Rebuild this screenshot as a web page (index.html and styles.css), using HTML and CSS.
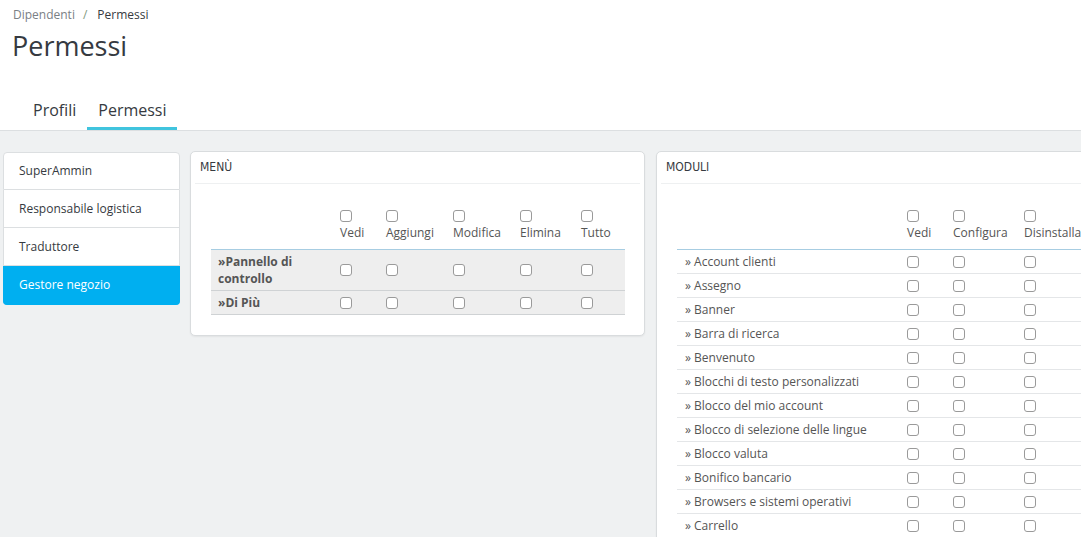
FILE: index.html
```html
<!DOCTYPE html>
<html lang="it">
<head>
<meta charset="utf-8">
<title>Permessi</title>
<link rel="stylesheet" href="styles.css">
</head>
<body>
<header class="head">
  <div class="crumbs"><span class="crumb">Dipendenti</span><span class="sep">/</span><span class="crumb-cur">Permessi</span></div>
  <h1 class="title">Permessi</h1>
  <nav class="tabs">
    <span class="tab">Profili</span>
    <span class="tab active">Permessi</span>
  </nav>
</header>
<main class="main">
  <ul class="profiles">
    <li class="profile">SuperAmmin</li>
    <li class="profile">Responsabile logistica</li>
    <li class="profile">Traduttore</li>
    <li class="profile active">Gestore negozio</li>
  </ul>
  <section class="panel panel-menu">
    <div class="panel-head">MENÙ</div>
    <table class="perm perm-menu">
      <colgroup><col class="c-name"><col class="c-46"><col class="c-67"><col class="c-67"><col class="c-61"><col class="c-49"></colgroup>
      <thead>
        <tr><th></th><th><input type="checkbox" class="cb"><br>Vedi</th><th><input type="checkbox" class="cb"><br>Aggiungi</th><th><input type="checkbox" class="cb"><br>Modifica</th><th><input type="checkbox" class="cb"><br>Elimina</th><th><input type="checkbox" class="cb"><br>Tutto</th></tr>
      </thead>
      <tbody>
        <tr class="grey"><td class="name bold">»Pannello di controllo</td><td><input type="checkbox" class="cb"></td><td><input type="checkbox" class="cb"></td><td><input type="checkbox" class="cb"></td><td><input type="checkbox" class="cb"></td><td><input type="checkbox" class="cb"></td></tr>
        <tr class="grey"><td class="name bold">»Di Più</td><td><input type="checkbox" class="cb"></td><td><input type="checkbox" class="cb"></td><td><input type="checkbox" class="cb"></td><td><input type="checkbox" class="cb"></td><td><input type="checkbox" class="cb"></td></tr>
      </tbody>
    </table>
  </section>
  <section class="panel panel-mod">
    <div class="panel-head">MODULI</div>
    <table class="perm perm-mod">
      <colgroup><col class="c-modname"><col class="c-46"><col class="c-71"><col class="c-90"></colgroup>
      <thead>
        <tr><th></th><th><input type="checkbox" class="cb"><br>Vedi</th><th><input type="checkbox" class="cb"><br>Configura</th><th><input type="checkbox" class="cb"><br>Disinstalla</th></tr>
      </thead>
      <tbody>
        <tr><td class="name">» Account clienti</td><td><input type="checkbox" class="cb"></td><td><input type="checkbox" class="cb"></td><td><input type="checkbox" class="cb"></td></tr>
        <tr><td class="name">» Assegno</td><td><input type="checkbox" class="cb"></td><td><input type="checkbox" class="cb"></td><td><input type="checkbox" class="cb"></td></tr>
        <tr><td class="name">» Banner</td><td><input type="checkbox" class="cb"></td><td><input type="checkbox" class="cb"></td><td><input type="checkbox" class="cb"></td></tr>
        <tr><td class="name">» Barra di ricerca</td><td><input type="checkbox" class="cb"></td><td><input type="checkbox" class="cb"></td><td><input type="checkbox" class="cb"></td></tr>
        <tr><td class="name">» Benvenuto</td><td><input type="checkbox" class="cb"></td><td><input type="checkbox" class="cb"></td><td><input type="checkbox" class="cb"></td></tr>
        <tr><td class="name">» Blocchi di testo personalizzati</td><td><input type="checkbox" class="cb"></td><td><input type="checkbox" class="cb"></td><td><input type="checkbox" class="cb"></td></tr>
        <tr><td class="name">» Blocco del mio account</td><td><input type="checkbox" class="cb"></td><td><input type="checkbox" class="cb"></td><td><input type="checkbox" class="cb"></td></tr>
        <tr><td class="name">» Blocco di selezione delle lingue</td><td><input type="checkbox" class="cb"></td><td><input type="checkbox" class="cb"></td><td><input type="checkbox" class="cb"></td></tr>
        <tr><td class="name">» Blocco valuta</td><td><input type="checkbox" class="cb"></td><td><input type="checkbox" class="cb"></td><td><input type="checkbox" class="cb"></td></tr>
        <tr><td class="name">» Bonifico bancario</td><td><input type="checkbox" class="cb"></td><td><input type="checkbox" class="cb"></td><td><input type="checkbox" class="cb"></td></tr>
        <tr><td class="name">» Browsers e sistemi operativi</td><td><input type="checkbox" class="cb"></td><td><input type="checkbox" class="cb"></td><td><input type="checkbox" class="cb"></td></tr>
        <tr><td class="name">» Carrello</td><td><input type="checkbox" class="cb"></td><td><input type="checkbox" class="cb"></td><td><input type="checkbox" class="cb"></td></tr>
      </tbody>
    </table>
  </section>
</main>
</body>
</html>
```

FILE: styles.css
```css
html, body {
  margin: 0;
  padding: 0;
  overflow: hidden;
  height: 100%;
}
body {
  font-family: "Open Sans", "Noto Sans", sans-serif;
  color: #363a41;
  background: #eff1f2;
  font-size: 12px;
}
.head {
  background: #fff;
  height: 130px;
  border-bottom: 1px solid #dcdfe1;
  box-sizing: content-box;
  display: flex;
  flex-direction: column;
}
.crumbs {
  padding: 6px 0 0 13px;
  font-size: 12px;
  line-height: 18px;
}
.crumb { color: #7a8085; }
.sep { color: #7f9a80; margin: 0 10px 0 8px; }
.crumb-cur { color: #363a41; }
.title {
  margin: 4px 0 0 12px;
  font-size: 27px;
  font-weight: 400;
  line-height: 36px;
  color: #363a41;
}
.tabs {
  margin-top: auto;
  padding-left: 22px;
  display: flex;
}
.tab {
  padding: 0 11px;
  font-size: 16px;
  line-height: 18px;
  height: 26px;
  color: #363a41;
  border-bottom: 3px solid transparent;
}
.tab.active { border-bottom-color: #40c4de; padding: 0 10px 0 11px; }

.main {
  display: flex;
  align-items: flex-start;
  padding: 20px 0 0 3px;
  width: 1200px;
}
.profiles {
  list-style: none;
  margin: 1px 10px 0 0;
  padding: 0;
  width: 177px;
  flex: none;
}
.profile {
  background: #fff;
  border: 1px solid #dcdfe1;
  border-top: none;
  height: 37px;
  line-height: 37px;
  padding-left: 15px;
  font-size: 12px;
  color: #363a41;
}
.profile:first-child { border-top: 1px solid #dcdfe1; border-radius: 4px 4px 0 0; height: 36px; line-height: 36px; }
.profile.active {
  background: #00aff0;
  border-color: #00aff0;
  color: #fff;
  border-radius: 0 0 4px 4px;
  height: 38px;
  line-height: 38px;
}
.panel {
  background: #fff;
  border: 1px solid #d9dcde;
  border-radius: 5px;
  box-shadow: 0 1px 2px rgba(0,0,0,0.06);
  padding: 0 4px 20px;
  flex: none;
}
.panel-menu { width: 445px; margin-right: 11px; }
.panel-mod { width: 520px; }
.panel-head {
  font-family: "DejaVu Sans Condensed", "Open Sans", sans-serif;
  font-size: 12px;
  color: #363a41;
  height: 31px;
  line-height: 31px;
  padding-left: 5px;
  border-bottom: 1px solid #eef0f1;
}
.perm {
  border-collapse: collapse;
  table-layout: fixed;
  margin: 0 0 0 16px;
  color: #555;
}
.perm-menu { width: 414px; }
.perm-mod { width: 476px; }
.c-name { width: 124px; }
.c-modname { width: 225px; }
.c-46 { width: 46px; }
.c-49 { width: 49px; }
.c-61 { width: 61px; }
.c-67 { width: 67px; }
.c-71 { width: 71px; }
.c-90 { width: 134px; }
.perm th {
  font-weight: 400;
  text-align: left;
  vertical-align: bottom;
  padding: 0 5px 8px;
  height: 57px;
  font-size: 12px;
  line-height: 17px;
  color: #555;
  border-bottom: 1px solid #a7cde2;
  white-space: nowrap;
}
.perm th .cb { margin-bottom: 1px; }
.perm td {
  padding: 0 5px;
  vertical-align: middle;
  border-bottom: 1px solid #e4e6e8;
  height: 23px;
  line-height: 17px;
}
.perm-menu td { border-bottom-color: #cfd2d4; }
.perm td.name { padding-left: 8px; font-size: 12px; }
.perm-menu td.name { padding-left: 7px; }
.bold { font-weight: 700; color: #555; }
.grey td { background: #eeeeee; }
.perm-menu tbody tr:first-child td { height: 40px; }
.cb {
  appearance: none;
  -webkit-appearance: none;
  width: 12px;
  height: 12px;
  margin: 0;
  border: 1px solid #9a9a9a;
  border-radius: 3px;
  background: #fff;
  vertical-align: middle;
  display: inline-block;
}
td .cb { display: block; }
```
